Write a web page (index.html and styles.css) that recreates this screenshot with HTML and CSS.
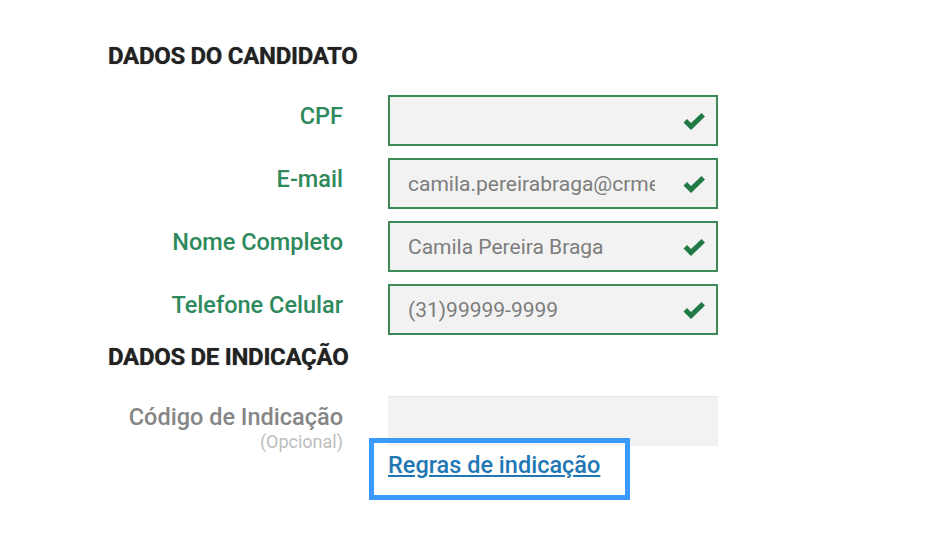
FILE: index.html
```html
<!DOCTYPE html>
<html lang="pt-BR">
<head>
<meta charset="utf-8">
<title>Dados do candidato</title>
<link rel="stylesheet" href="styles.css">
</head>
<body>
<main class="form">
  <h2 class="section-title">DADOS DO CANDIDATO</h2>
  <div class="rows">
    <div class="row">
      <label class="label">CPF</label>
      <div class="field valid">
        <span class="value"></span>
        <svg class="check" viewBox="0 0 24 20" width="24" height="20"><path d="M1.5 10.5 L5 7 L9 11 L19.5 1 L23 4.5 L9 18 Z" fill="#1f7a45"/></svg>
      </div>
    </div>
    <div class="row">
      <label class="label">E-mail</label>
      <div class="field valid">
        <span class="value">camila.pereirabraga@crmes.com</span>
        <svg class="check" viewBox="0 0 24 20" width="24" height="20"><path d="M1.5 10.5 L5 7 L9 11 L19.5 1 L23 4.5 L9 18 Z" fill="#1f7a45"/></svg>
      </div>
    </div>
    <div class="row">
      <label class="label">Nome Completo</label>
      <div class="field valid">
        <span class="value">Camila Pereira Braga</span>
        <svg class="check" viewBox="0 0 24 20" width="24" height="20"><path d="M1.5 10.5 L5 7 L9 11 L19.5 1 L23 4.5 L9 18 Z" fill="#1f7a45"/></svg>
      </div>
    </div>
    <div class="row">
      <label class="label">Telefone Celular</label>
      <div class="field valid">
        <span class="value">(31)99999-9999</span>
        <svg class="check" viewBox="0 0 24 20" width="24" height="20"><path d="M1.5 10.5 L5 7 L9 11 L19.5 1 L23 4.5 L9 18 Z" fill="#1f7a45"/></svg>
      </div>
    </div>
  </div>
  <h2 class="section-title second">DADOS DE INDICAÇÃO</h2>
  <div class="row code-row">
    <div class="label-block">
      <label class="label muted">Código de Indicação</label>
      <span class="optional">(Opcional)</span>
    </div>
    <div class="field plain"></div>
  </div>
  <div class="link-row">
    <a class="rules-link" href="#">Regras de indicação</a>
  </div>
</main>
</body>
</html>
```

FILE: styles.css
```css
html, body {
  margin: 0;
  padding: 0;
  background: #ffffff;
}

body {
  min-height: 536px;
  font-family: Roboto, "Noto Sans", Arial, sans-serif;
}

.form {
  width: 610px;
  padding: 43px 0 40px 108px;
}

.section-title {
  margin: 0;
  font-size: 24px;
  line-height: 26px;
  font-weight: 700;
  color: #222222;
  letter-spacing: -0.3px;
  text-shadow: 0 0 1px rgba(0, 0, 0, 0.5);
}

.section-title.second {
  margin-top: 9px;
}

.rows {
  display: flex;
  flex-direction: column;
  gap: 12px;
  margin-top: 26px;
}

.row {
  display: flex;
  align-items: flex-start;
  gap: 45px;
}

.label {
  width: 235px;
  flex: none;
  text-align: right;
  font-size: 23.5px;
  line-height: 24px;
  font-weight: 500;
  color: #2e8a5c;
  padding-top: 9px;
}

.field {
  width: 330px;
  height: 51px;
  box-sizing: border-box;
  display: flex;
  align-items: center;
  justify-content: space-between;
  background: #f2f2f2;
}

.field.valid {
  border: 2px solid #3b8a57;
  padding: 0 10px 0 18px;
}

.value {
  width: 247px;
  overflow: hidden;
  white-space: nowrap;
  font-size: 21px;
  color: #7d7d7d;
  line-height: 26px;
  height: 26px;
}

.check {
  flex: none;
  margin-top: 2px;
}

.code-row {
  margin-top: 26px;
}

.label-block {
  width: 235px;
  flex: none;
  display: flex;
  flex-direction: column;
  align-items: flex-end;
}

.label.muted {
  width: auto;
  color: #868686;
  padding-top: 9px;
}

.optional {
  margin-top: 2px;
  font-size: 18px;
  line-height: 22px;
  color: #bdbdbd;
}

.field.plain {
  height: 50px;
  border-top: 1px solid #e6e6e6;
}

.link-row {
  padding-left: 280px;
  margin-top: -2px;
}

.rules-link {
  position: relative;
  display: inline-block;
  font-size: 23.5px;
  line-height: 28px;
  font-weight: 500;
  color: #1f78b4;
  text-decoration: underline;
  text-underline-offset: 2px;
}

.rules-link::after {
  content: "";
  position: absolute;
  left: -19px;
  right: -30px;
  top: -13px;
  bottom: -21px;
  border: 5px solid #3a9aff;
}
```
